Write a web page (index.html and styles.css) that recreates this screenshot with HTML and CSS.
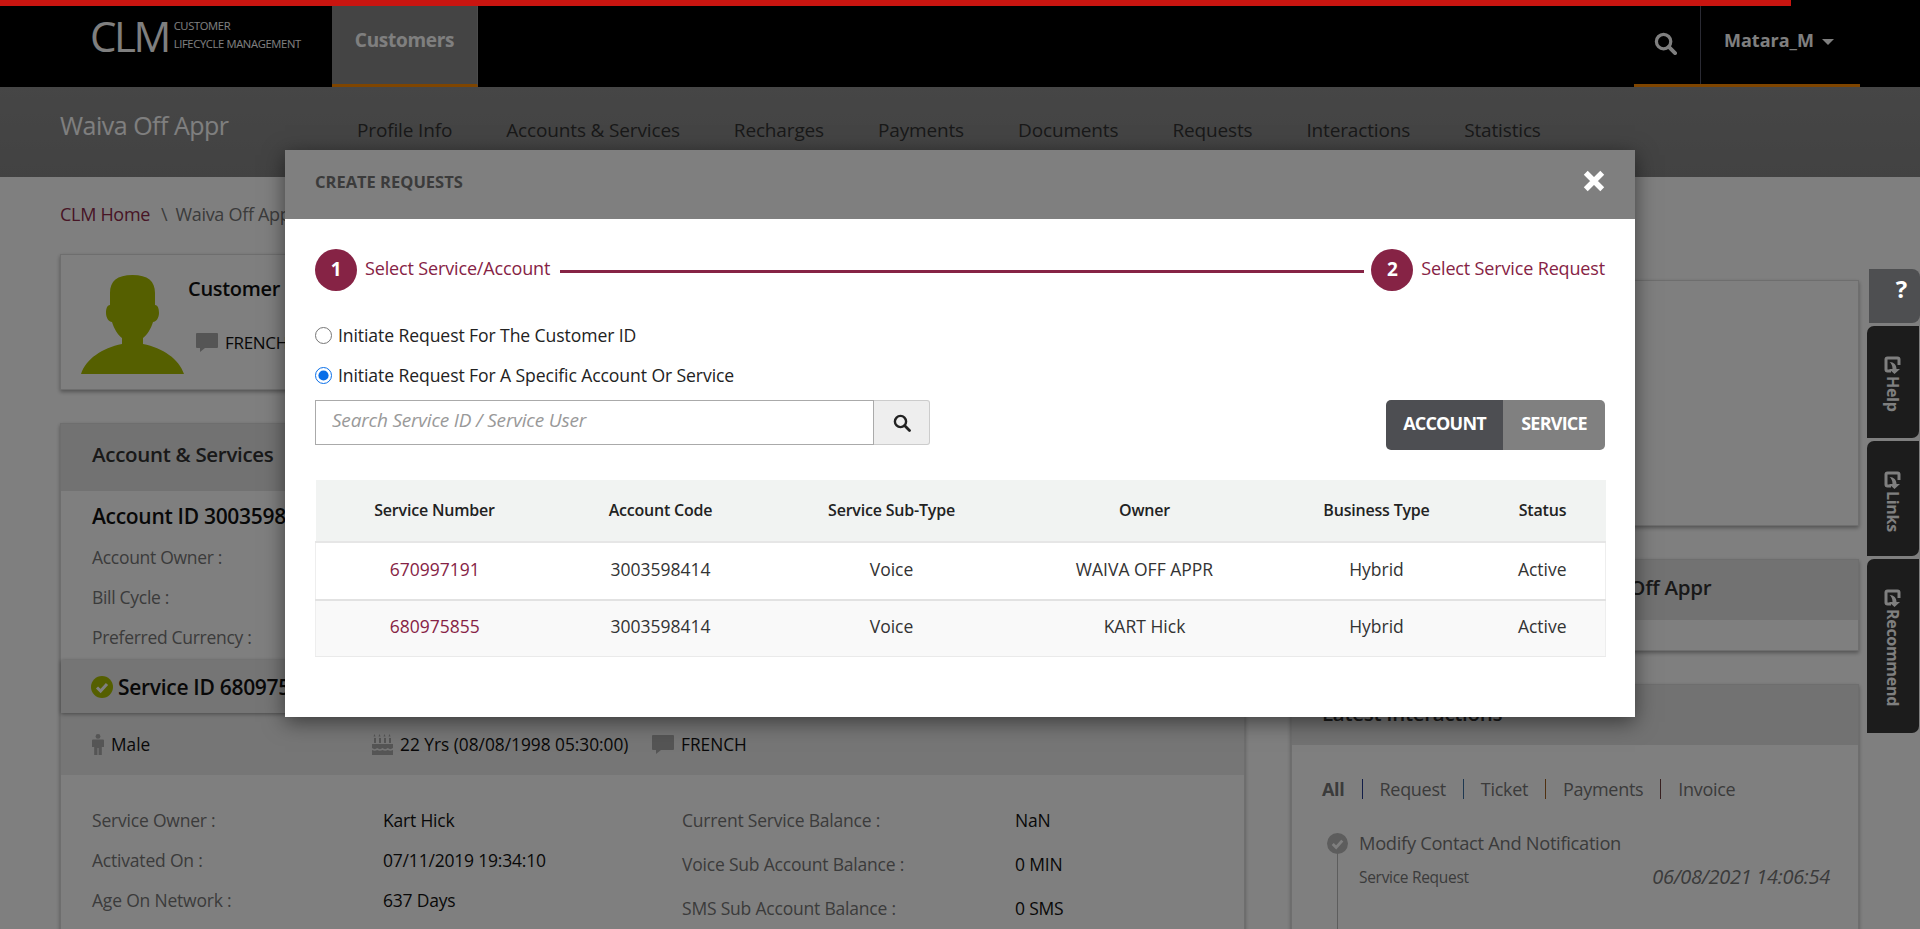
FILE: index.html
```html
<!DOCTYPE html>
<html>
    <head>
        <meta charset="utf-8">
        <title>CLM</title>
        <link rel="stylesheet" href="styles.css">
    </head>
    <body>
        <div class="progress"></div>

        <header class="topbar">
            <div class="logo">
                <span class="logo-big">CLM</span>
                <span class="logo-small">CUSTOMER<br>LIFECYCLE MANAGEMENT</span>
            </div>
            <div class="top-tab">Customers</div>
            <div class="top-right">
                <div class="top-search">
                    <svg viewBox="0 0 24 24" width="24" height="24"><circle cx="10" cy="10" r="7.5" fill="none" stroke="#fff" stroke-width="3.4"/><path d="M15.5 15.5l6.5 6.5" stroke="#fff" stroke-width="4" stroke-linecap="round"/></svg>
                </div>
                <div class="top-user">Matara_M<span class="caret"></span></div>
            </div>
        </header>

        <div class="subbar">
            <div class="subbar-title">Waiva Off Appr</div>
            <nav class="subnav">
                <a>Profile Info</a>
                <a>Accounts &amp; Services</a>
                <a>Recharges</a>
                <a>Payments</a>
                <a>Documents</a>
                <a>Requests</a>
                <a>Interactions</a>
                <a>Statistics</a>
            </nav>
        </div>

        <main class="page">
            <div class="crumbs"><a>CLM Home</a><span>\</span>Waiva Off Appr</div>
            <div class="columns">
                <div class="col-left">
                    <section class="panel cust-card">
                        <svg class="avatar" viewBox="0 0 103 99"><path fill="#aabf00" d="M51.5 0C67 0 74 6 74 18V30C77 30 78 34 78 38C78 43 75 47 72 47C70 54 66 60 62 63V69C82 73 98 84 103 99H0C5 84 21 73 41 69V63C37 60 33 54 31 47C28 47 25 43 25 38C25 34 26 30 29 30V18C29 6 36 0 51.5 0Z"/></svg>
                        <div class="cust-info">
                            <div class="cust-name">Customer</div>
                            <div class="cust-lang">
                                <svg class="bubble" viewBox="0 0 22 19"><path fill="#aaa" d="M1 0h20a1 1 0 0 1 1 1v13a1 1 0 0 1-1 1H9l-5 4v-4H1a1 1 0 0 1-1-1V1a1 1 0 0 1 1-1z"/></svg>
                                FRENCH
                            </div>
                        </div>
                    </section>

                    <section class="panel acct-panel">
                        <h2 class="panel-head">Account &amp; Services</h2>
                        <div class="acct-body">
                            <div class="acct-id">Account ID 3003598414</div>
                            <div class="acct-row">Account Owner :</div>
                            <div class="acct-row">Bill Cycle :</div>
                            <div class="acct-row">Preferred Currency :</div>
                        </div>
                        <div class="service-bar">
                            <svg class="check" viewBox="0 0 22 22"><circle cx="11" cy="11" r="11" fill="#aabf00"/><path d="M6 11.5l3.6 3.6L16 8" fill="none" stroke="#fff" stroke-width="3"/></svg>
                            Service ID 680975855
                        </div>
                        <div class="service-meta">
                            <span class="meta-a">
                                <svg class="man" viewBox="0 0 12 21"><circle cx="6" cy="2.4" r="2.4" fill="#aaa"/><path fill="#aaa" d="M1 5.5h10a1 1 0 0 1 1 1V13h-2.2v8H6.6v-7H5.4v7H2.2v-8H0V6.5a1 1 0 0 1 1-1z"/></svg>
                                Male
                            </span>
                            <span class="meta-b">
                                <svg class="cake" viewBox="0 0 21 21"><path fill="#aaa" d="M2 4h2v5H2zM7 4h2v5H7zM12 4h2v5h-2zM17 4h2v5h-2zM2.5 0l1 2.5h-2zM7.5 0l1 2.5h-2zM12.5 0l1 2.5h-2zM17.5 0l1 2.5h-2zM0 10h21v4c-2 1.5-3.5 1.5-5.2 0-1.8 1.5-3.5 1.5-5.3 0-1.8 1.5-3.500 1.5-5.3 0-1.7 1.5-3.2 1.5-5.2 0zM0 16c2 1 3.5 1 5.2 0 1.8 1 3.5 1 5.3 0 1.8 1 3.5 1 5.3 0 1.7 1 3.2 1 5.2 0v5H0z"/></svg>
                                22 Yrs (08/08/1998 05:30:00)
                            </span>
                            <span class="meta-c">
                                <svg class="bubble" viewBox="0 0 22 19"><path fill="#aaa" d="M1 0h20a1 1 0 0 1 1 1v13a1 1 0 0 1-1 1H9l-5 4v-4H1a1 1 0 0 1-1-1V1a1 1 0 0 1 1-1z"/></svg>
                                FRENCH
                            </span>
                        </div>
                        <div class="service-detail">
                            <div class="detail-col detail-one">
                                <div class="detail-row"><span class="lbl">Service Owner :</span><span class="val">Kart Hick</span></div>
                                <div class="detail-row"><span class="lbl">Activated On :</span><span class="val">07/11/2019 19:34:10</span></div>
                                <div class="detail-row"><span class="lbl">Age On Network :</span><span class="val">637 Days</span></div>
                            </div>
                            <div class="detail-col detail-two">
                                <div class="detail-row"><span class="lbl">Current Service Balance :</span><span class="val">NaN</span></div>
                                <div class="detail-row"><span class="lbl">Voice Sub Account Balance :</span><span class="val">0 MIN</span></div>
                                <div class="detail-row"><span class="lbl">SMS Sub Account Balance :</span><span class="val">0 SMS</span></div>
                            </div>
                        </div>
                    </section>
                </div>

                <div class="col-right">
                    <section class="panel blank-panel"></section>
                    <section class="panel name-panel">
                        <h2 class="panel-head name-head">Waiva Off Appr</h2>
                    </section>
                    <section class="panel latest-panel">
                        <h2 class="panel-head latest-head">Latest Interactions</h2>
                        <div class="filters">
                            <b>All</b><i class="sep sep-blue"></i><a>Request</a><i class="sep sep-steel"></i><a>Ticket</a><i class="sep sep-brown"></i><a>Payments</a><i class="sep sep-mix"></i><a>Invoice</a>
                        </div>
                        <div class="tl-item">
                            <svg class="tl-icon" viewBox="0 0 22 22"><circle cx="11" cy="11" r="11" fill="#bbb"/><path d="M6 11.5l3.6 3.6L16 8" fill="none" stroke="#fff" stroke-width="3"/></svg>
                            <div class="tl-text">
                                <div class="tl-title">Modify Contact And Notification</div>
                                <div class="tl-type">Service Request</div>
                            </div>
                            <div class="tl-date">06/08/2021 14:06:54</div>
                        </div>
                    </section>
                </div>
            </div>
        </main>

        <div class="side-tabs">
            <a class="side-tab tab-help">
                <svg viewBox="0 0 18 18" width="18" height="18"><path d="M9 3H3.5A1.5 1.5 0 0 0 2 4.5v10A1.5 1.5 0 0 0 3.5 16h10a1.5 1.5 0 0 0 1.5-1.5V11" fill="none" stroke="#fff" stroke-width="3"/><path d="M6 12.5c0-4.5 3-7 7-7V2l5 5.500L13 13V9.5c-3 0-5.500 1-7 3z" fill="#fff"/></svg>
                Help
            </a>
            <a class="side-tab tab-links">
                <svg viewBox="0 0 18 18" width="18" height="18"><path d="M9 3H3.5A1.5 1.5 0 0 0 2 4.5v10A1.5 1.5 0 0 0 3.5 16h10a1.5 1.5 0 0 0 1.5-1.5V11" fill="none" stroke="#fff" stroke-width="3"/><path d="M6 12.5c0-4.5 3-7 7-7V2l5 5.500L13 13V9.5c-3 0-5.500 1-7 3z" fill="#fff"/></svg>
                Links
            </a>
            <a class="side-tab tab-rec">
                <svg viewBox="0 0 18 18" width="18" height="18"><path d="M9 3H3.5A1.5 1.5 0 0 0 2 4.5v10A1.5 1.5 0 0 0 3.5 16h10a1.5 1.5 0 0 0 1.5-1.5V11" fill="none" stroke="#fff" stroke-width="3"/><path d="M6 12.5c0-4.5 3-7 7-7V2l5 5.500L13 13V9.5c-3 0-5.500 1-7 3z" fill="#fff"/></svg>
                Recommend
            </a>
        </div>

        <div class="overlay"></div>
        <div class="side-q">?</div>

        <div class="modal">
            <div class="modal-head">
                <span class="modal-title">CREATE REQUESTS</span>
                <svg class="modal-close" viewBox="0 0 20 20"><path d="M2.5 2.5l15 15M17.5 2.5l-15 15" stroke="#fff" stroke-width="5"/></svg>
            </div>
            <div class="modal-body">
                <div class="steps">
                    <span class="step-num">1</span>
                    <span class="step-label">Select Service/Account</span>
                    <span class="step-line"></span>
                    <span class="step-num">2</span>
                    <span class="step-label">Select Service Request</span>
                </div>

                <label class="radio-row"><input type="radio" name="scope"> Initiate Request For The Customer ID</label>
                <label class="radio-row"><input type="radio" name="scope" checked> Initiate Request For A Specific Account Or Service</label>

                <div class="search-row">
                    <div class="search-box">
                        <input type="text" placeholder="Search Service ID / Service User">
                        <button class="search-btn">
                            <svg viewBox="0 0 18 18" width="18" height="18"><circle cx="7.5" cy="7.5" r="5.6" fill="none" stroke="#222" stroke-width="2.4"/><path d="M11.8 11.8l4.7 4.7" stroke="#222" stroke-width="2.8" stroke-linecap="round"/></svg>
                        </button>
                    </div>
                    <div class="toggle">
                        <span class="toggle-on">ACCOUNT</span>
                        <span class="toggle-off">SERVICE</span>
                    </div>
                </div>

                <table class="req-table">
                    <thead>
                        <tr>
                            <th class="c1">Service Number</th>
                            <th class="c2">Account Code</th>
                            <th class="c3">Service Sub-Type</th>
                            <th class="c4">Owner</th>
                            <th class="c5">Business Type</th>
                            <th class="c6">Status</th>
                        </tr>
                    </thead>
                    <tbody>
                        <tr>
                            <td><a>670997191</a></td>
                            <td>3003598414</td>
                            <td>Voice</td>
                            <td>WAIVA OFF APPR</td>
                            <td>Hybrid</td>
                            <td>Active</td>
                        </tr>
                        <tr class="alt">
                            <td><a>680975855</a></td>
                            <td>3003598414</td>
                            <td>Voice</td>
                            <td>KART Hick</td>
                            <td>Hybrid</td>
                            <td>Active</td>
                        </tr>
                    </tbody>
                </table>
            </div>
        </div>
    </body>
</html>
```

FILE: styles.css
```css
*{
    margin: 0;
    padding: 0;
    box-sizing: border-box;
}
html, body{
    height: 929px;
    overflow: hidden;
}
body{
    font-family: 'Open Sans', sans-serif;
    font-size: 17px;
    letter-spacing: -0.3px;
    color: #222;
    background: #fff;
    position: relative;
}

/* top bars */
.progress{
    position: absolute;
    top: 0;
    left: 0;
    width: 1791px;
    height: 6px;
    background: #c91510;
    z-index: 30;
}
.topbar{
    height: 87px;
    padding-top: 6px;
    padding-left: 90px;
    background: #000;
    display: flex;
    color: #fff;
}
.logo{
    width: 242px;
    display: flex;
    align-items: flex-start;
}
.logo-big{
    font-size: 42px;
    font-weight: 400;
    line-height: 48px;
    margin-top: 6px;
    letter-spacing: -2.5px;
}
.logo-small{
    font-size: 11.2px;
    line-height: 18px;
    margin-top: 11px;
    margin-left: 5px;
    letter-spacing: -0.35px;
}
.top-tab{
    width: 146px;
    background: #888;
    border-bottom: 3px solid #ff8a00;
    border-right: 1px solid #999;
    font-size: 19px;
    font-weight: 700;
    text-align: center;
    padding-top: 21px;
}
.top-right{
    margin-left: auto;
    margin-right: 60px;
    width: 226px;
    display: flex;
    border-bottom: 3px solid #ff8a00;
}
.top-search{
    width: 67px;
    border-right: 1px solid #556;
    padding: 26px 0 0 20px;
}
.top-search svg{
    display: block;
    width: 23px;
    height: 23px;
}
.top-user{
    padding: 22px 0 0 23px;
    font-size: 18px;
    font-weight: 700;
    letter-spacing: 0;
}
.caret{
    display: inline-block;
    margin-left: 8px;
    vertical-align: 2px;
    border-top: 6px solid #fff;
    border-left: 6px solid transparent;
    border-right: 6px solid transparent;
}
.subbar{
    height: 90px;
    background: linear-gradient(#8c8c8c, #858585);
    display: flex;
    padding-left: 60px;
    color: #fff;
}
.subbar-title{
    width: 297px;
    font-size: 25px;
    padding-top: 21px;
    letter-spacing: -0.5px;
}
.subnav{
    display: flex;
    padding-top: 30px;
    color: #333;
    font-size: 19px;
    letter-spacing: -0.15px;
}
.subnav a{
    margin-right: 54px;
}

/* page behind the modal */
.page{
    height: 752px;
    overflow: hidden;
    padding: 0 61px 0 60px;
}
.crumbs{
    height: 77px;
    padding-top: 25px;
    font-size: 18px;
    color: #777;
}
.crumbs a{
    color: #8e2a4a;
}
.crumbs span{
    margin: 0 8px 0 11px;
}
.columns{
    display: flex;
    justify-content: space-between;
}
.col-left{
    width: 1185px;
}
.col-right{
    width: 568px;
    padding-top: 26px;
}
.panel{
    background: #fff;
    border: 1px solid #ddd;
    box-shadow: 0 2px 4px rgba(0,0,0,.35);
}
.panel-head{
    font-size: 20.5px;
    font-weight: 600;
    color: #333;
    background: #e4e4e4;
}
.cust-card{
    height: 136px;
    display: flex;
    padding: 20px 0 0 20px;
}
.avatar{
    width: 103px;
    height: 99px;
}
.cust-info{
    margin-left: 4px;
}
.cust-name{
    font-size: 20px;
    font-weight: 600;
    color: #111;
}
.cust-lang{
    display: flex;
    align-items: center;
    gap: 7px;
    margin: 29px 0 0 8px;
    font-size: 17px;
    color: #111;
}
.bubble{
    width: 22px;
    height: 19px;
}
.acct-panel{
    margin-top: 33px;
    height: 600px;
}
.acct-panel .panel-head{
    height: 67px;
    padding: 16px 0 0 31px;
}
.acct-body{
    height: 170px;
    padding: 11px 0 0 31px;
}
.acct-id{
    font-size: 21px;
    font-weight: 600;
    color: #111;
    margin-bottom: 7px;
}
.acct-row{
    height: 40px;
    line-height: 40px;
    font-size: 17.5px;
    color: #777;
}
.service-bar{
    height: 53px;
    margin-top: -1px;
    background: #eaeaea;
    box-shadow: 0 1px 4px rgba(0,0,0,.4);
    position: relative;
    display: flex;
    align-items: center;
    gap: 5px;
    padding-left: 30px;
    font-size: 21px;
    font-weight: 600;
    color: #111;
}
.check{
    width: 22px;
    height: 22px;
}
.service-meta{
    height: 62px;
    background: #ececec;
    display: flex;
    align-items: center;
    padding-left: 31px;
    font-size: 17.3px;
    letter-spacing: 0;
    color: #111;
}
.service-meta span{
    display: flex;
    align-items: center;
    gap: 7px;
}
.meta-a{
    width: 280px;
}
.meta-b{
    width: 280px;
}
.man{
    width: 12px;
    height: 21px;
}
.cake{
    width: 21px;
    height: 21px;
}
.service-detail{
    display: flex;
    padding: 31px 0 0 31px;
    font-size: 17.5px;
    letter-spacing: -0.2px;
}
.detail-col{
    display: flex;
    flex-direction: column;
}
.detail-one{
    width: 590px;
    gap: 12px;
}
.detail-two{
    gap: 16px;
}
.detail-row{
    display: flex;
    height: 28px;
    line-height: 28px;
}
.lbl{
    color: #777;
}
.detail-one .lbl{
    width: 291px;
}
.detail-two .lbl{
    width: 333px;
}
.val{
    color: #111;
}
.blank-panel{
    height: 246px;
}
.name-panel{
    height: 92px;
    margin-top: 33px;
}
.name-head{
    height: 60px;
    padding: 13px 0 0 274px;
}
.latest-panel{
    margin-top: 33px;
    height: 400px;
    color: #777;
}
.latest-head{
    height: 60px;
    padding: 14px 0 0 30px;
}
.filters{
    display: flex;
    align-items: center;
    padding: 32px 0 0 30px;
    font-size: 18px;
}
.filters b{
    font-weight: 700;
}
.sep{
    width: 1px;
    height: 20px;
    margin: 0 17px;
}
.sep-blue{
    background: #223a90;
}
.sep-steel{
    background: #3a6ea0;
}
.sep-brown{
    background: #a06020;
}
.sep-mix{
    background: #704040;
}
.tl-item{
    display: flex;
    margin: 32px 0 0 35px;
    position: relative;
}
.tl-item::before{
    content: '';
    position: absolute;
    left: 10px;
    top: 20px;
    width: 1px;
    height: 90px;
    background: #bbb;
}
.tl-icon{
    width: 21px;
    height: 21px;
    flex: none;
}
.tl-text{
    margin-left: 11px;
}
.tl-title{
    font-size: 18.3px;
    line-height: 24px;
    margin-top: -2px;
}
.tl-type{
    font-size: 15.5px;
    margin-top: 11px;
}
.tl-date{
    position: absolute;
    right: 28px;
    top: 30px;
    font-size: 20px;
    font-style: italic;
}

/* right edge tabs */
.side-tabs{
    position: absolute;
    top: 326px;
    right: 1px;
    width: 52px;
    display: flex;
    flex-direction: column;
    gap: 3px;
}
.side-tab{
    background: #383838;
    color: #fff;
    border-radius: 7px 0 7px 0;
    writing-mode: vertical-rl;
    display: flex;
    align-items: center;
    gap: 2px;
    padding-top: 30px;
    font-size: 16px;
    font-weight: 700;
    letter-spacing: -0.3px;
}
.side-tab svg{
    transform: rotate(90deg);
}
.tab-help{
    height: 112px;
}
.tab-links{
    height: 115px;
}
.tab-rec{
    height: 174px;
}
.overlay{
    position: absolute;
    top: 0;
    left: 0;
    right: 0;
    bottom: 0;
    background: rgba(0,0,0,.5);
    z-index: 10;
}
.side-q{
    position: absolute;
    top: 269px;
    right: 0;
    width: 51px;
    height: 54px;
    background: #4e4f51;
    border-radius: 0 8px 8px 0;
    color: #fff;
    font-size: 24px;
    font-weight: 700;
    text-align: right;
    padding: 3px 13px 0 0;
    z-index: 20;
}

/* modal */
.modal{
    position: absolute;
    top: 150px;
    left: 285px;
    width: 1350px;
    height: 567px;
    background: #fff;
    box-shadow: 0 5px 20px rgba(0,0,0,.5);
    z-index: 20;
}
.modal-head{
    height: 69px;
    background: #7f7f7f;
    display: flex;
    align-items: center;
    justify-content: space-between;
    padding: 0 30px;
}
.modal-title{
    font-size: 16.5px;
    font-weight: 700;
    letter-spacing: 0;
    color: #3b3b3b;
    margin-top: -6px;
}
.modal-close{
    width: 22px;
    height: 22px;
    margin-top: -8px;
}
.modal-body{
    padding: 30px 30px 0;
}
.steps{
    display: flex;
    align-items: center;
    color: #862345;
    font-size: 18px;
    letter-spacing: -0.15px;
    height: 42px;
}
.step-num{
    width: 42px;
    height: 42px;
    border-radius: 50%;
    background: #862345;
    color: #fff;
    font-size: 19px;
    font-weight: 700;
    text-align: center;
    line-height: 40px;
    flex: none;
}
.step-label{
    margin-left: 8px;
    margin-top: -5px;
}
.step-line{
    flex: 1;
    height: 3px;
    background: #862345;
    margin: 2px 7px 0 10px;
}
.radio-row{
    display: flex;
    align-items: center;
    gap: 6px;
    height: 24px;
    margin-top: 16px;
    font-size: 17.6px;
    letter-spacing: -0.1px;
    color: #222;
}
.steps + .radio-row{
    margin-top: 32px;
}
.radio-row input{
    width: 17px;
    height: 17px;
    margin: 0;
    accent-color: #0a6fe8;
}
.search-row{
    display: flex;
    justify-content: space-between;
    margin-top: 13px;
    height: 50px;
}
.search-box{
    display: flex;
    width: 615px;
    height: 45px;
}
.search-box input{
    flex: 1;
    min-width: 0;
    border: 1px solid #aaa;
    padding: 0 0 6px 16px;
    font-family: 'Open Sans', sans-serif;
    font-size: 19px;
    font-style: italic;
    letter-spacing: -0.2px;
    outline: 0;
}
.search-box input::placeholder{
    color: #999;
}
.search-btn{
    width: 56px;
    background: #eee;
    border: 1px solid #ccc;
    border-left: 0;
    border-radius: 0 3px 3px 0;
    display: flex;
    align-items: center;
    justify-content: center;
}
.toggle{
    display: flex;
    width: 219px;
    border-radius: 5px;
    overflow: hidden;
    color: #fff;
    font-size: 18px;
    font-weight: 700;
    letter-spacing: -0.8px;
    line-height: 46px;
    text-align: center;
}
.toggle-on{
    width: 117px;
    background: #4d4e52;
}
.toggle-off{
    flex: 1;
    background: #808080;
}
.req-table{
    width: 100%;
    margin-top: 30px;
    border-collapse: collapse;
    table-layout: fixed;
    text-align: center;
}
.req-table th{
    height: 62px;
    background: #f1f3f2;
    border-bottom: 2px solid #e6e6e6;
    font-size: 16px;
    font-weight: 600;
    letter-spacing: -0.2px;
    color: #222;
    padding-bottom: 2px;
}
.req-table td{
    height: 58px;
    padding-bottom: 5px;
    font-size: 17.5px;
    letter-spacing: 0;
    color: #333;
    border-bottom: 2px solid #e2e2e2;
}
.req-table tr.alt td{
    background: #f9f9f9;
    height: 56px;
    border-bottom: 1px solid #eaeaea;
}
.req-table tbody tr td:first-child{
    border-left: 1px solid #eee;
}
.req-table tbody tr td:last-child{
    border-right: 1px solid #eee;
}
.req-table a{
    color: #862345;
}
.c1{
    width: 238px;
}
.c2{
    width: 214px;
}
.c3{
    width: 248px;
}
.c4{
    width: 258px;
}
.c5{
    width: 206px;
}
.c6{
    width: 126px;
}
```
